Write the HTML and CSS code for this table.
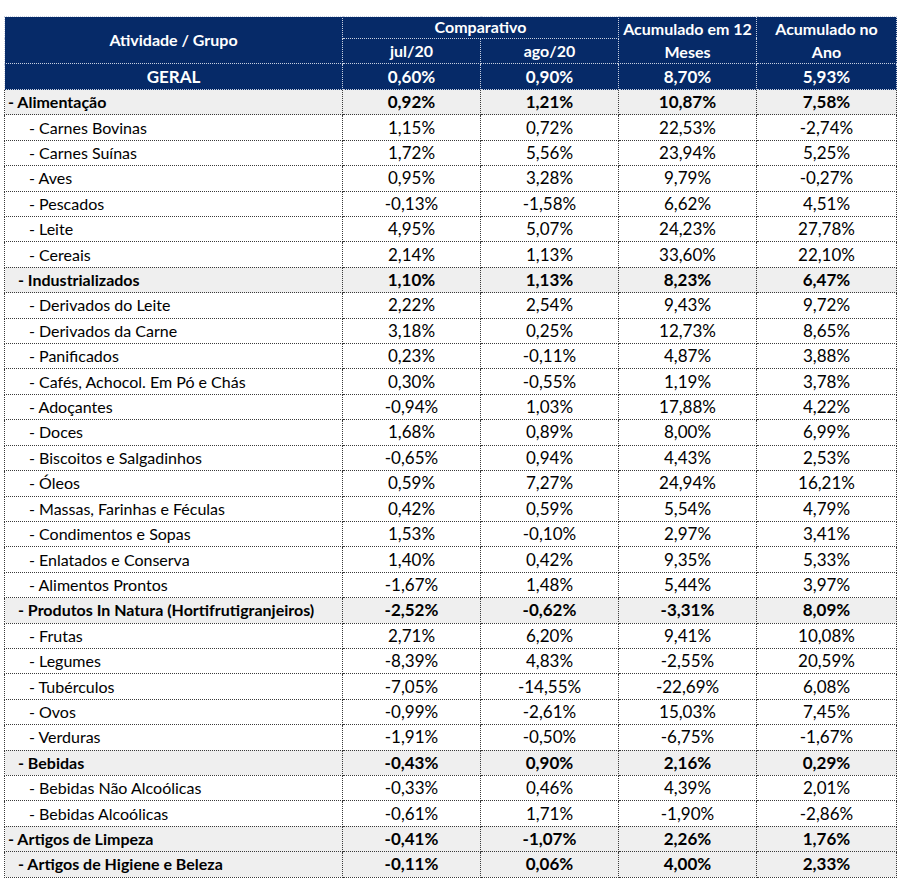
FILE: index.html
```html
<!DOCTYPE html>
<html lang="pt">
<head>
<meta charset="utf-8">
<link rel="stylesheet" href="styles.css">
</head>
<body>
<table class="grid">
  <colgroup>
    <col class="c-name"><col class="c-num"><col class="c-num"><col class="c-num"><col class="c-last">
  </colgroup>
  <thead>
    <tr class="h1">
      <th rowspan="2">Atividade / Grupo</th>
      <th colspan="2">Comparativo</th>
      <th rowspan="2" class="wrap">Acumulado em 12<br>Meses</th>
      <th rowspan="2" class="wrap">Acumulado no<br>Ano</th>
    </tr>
    <tr class="h2">
      <th>jul/20</th>
      <th>ago/20</th>
    </tr>
    <tr class="total">
      <th>GERAL</th><th>0,60%</th><th>0,90%</th><th>8,70%</th><th>5,93%</th>
    </tr>
  </thead>
  <tbody>
    <tr class="grp l0"><td>- Alimentação</td><td>0,92%</td><td>1,21%</td><td>10,87%</td><td>7,58%</td></tr>
    <tr class="l2"><td>- Carnes Bovinas</td><td>1,15%</td><td>0,72%</td><td>22,53%</td><td>-2,74%</td></tr>
    <tr class="l2"><td>- Carnes Suínas</td><td>1,72%</td><td>5,56%</td><td>23,94%</td><td>5,25%</td></tr>
    <tr class="l2"><td>- Aves</td><td>0,95%</td><td>3,28%</td><td>9,79%</td><td>-0,27%</td></tr>
    <tr class="l2"><td>- Pescados</td><td>-0,13%</td><td>-1,58%</td><td>6,62%</td><td>4,51%</td></tr>
    <tr class="l2"><td>- Leite</td><td>4,95%</td><td>5,07%</td><td>24,23%</td><td>27,78%</td></tr>
    <tr class="l2"><td>- Cereais</td><td>2,14%</td><td>1,13%</td><td>33,60%</td><td>22,10%</td></tr>
    <tr class="grp l1"><td>- Industrializados</td><td>1,10%</td><td>1,13%</td><td>8,23%</td><td>6,47%</td></tr>
    <tr class="l2"><td>- Derivados do Leite</td><td>2,22%</td><td>2,54%</td><td>9,43%</td><td>9,72%</td></tr>
    <tr class="l2"><td>- Derivados da Carne</td><td>3,18%</td><td>0,25%</td><td>12,73%</td><td>8,65%</td></tr>
    <tr class="l2"><td>- Panificados</td><td>0,23%</td><td>-0,11%</td><td>4,87%</td><td>3,88%</td></tr>
    <tr class="l2"><td>- Cafés, Achocol. Em Pó e Chás</td><td>0,30%</td><td>-0,55%</td><td>1,19%</td><td>3,78%</td></tr>
    <tr class="l2"><td>- Adoçantes</td><td>-0,94%</td><td>1,03%</td><td>17,88%</td><td>4,22%</td></tr>
    <tr class="l2"><td>- Doces</td><td>1,68%</td><td>0,89%</td><td>8,00%</td><td>6,99%</td></tr>
    <tr class="l2"><td>- Biscoitos e Salgadinhos</td><td>-0,65%</td><td>0,94%</td><td>4,43%</td><td>2,53%</td></tr>
    <tr class="l2"><td>- Óleos</td><td>0,59%</td><td>7,27%</td><td>24,94%</td><td>16,21%</td></tr>
    <tr class="l2"><td>- Massas, Farinhas e Féculas</td><td>0,42%</td><td>0,59%</td><td>5,54%</td><td>4,79%</td></tr>
    <tr class="l2"><td>- Condimentos e Sopas</td><td>1,53%</td><td>-0,10%</td><td>2,97%</td><td>3,41%</td></tr>
    <tr class="l2"><td>- Enlatados e Conserva</td><td>1,40%</td><td>0,42%</td><td>9,35%</td><td>5,33%</td></tr>
    <tr class="l2"><td>- Alimentos Prontos</td><td>-1,67%</td><td>1,48%</td><td>5,44%</td><td>3,97%</td></tr>
    <tr class="grp l1"><td>- Produtos In Natura (Hortifrutigranjeiros)</td><td>-2,52%</td><td>-0,62%</td><td>-3,31%</td><td>8,09%</td></tr>
    <tr class="l2"><td>- Frutas</td><td>2,71%</td><td>6,20%</td><td>9,41%</td><td>10,08%</td></tr>
    <tr class="l2"><td>- Legumes</td><td>-8,39%</td><td>4,83%</td><td>-2,55%</td><td>20,59%</td></tr>
    <tr class="l2"><td>- Tubérculos</td><td>-7,05%</td><td>-14,55%</td><td>-22,69%</td><td>6,08%</td></tr>
    <tr class="l2"><td>- Ovos</td><td>-0,99%</td><td>-2,61%</td><td>15,03%</td><td>7,45%</td></tr>
    <tr class="l2"><td>- Verduras</td><td>-1,91%</td><td>-0,50%</td><td>-6,75%</td><td>-1,67%</td></tr>
    <tr class="grp l1"><td>- Bebidas</td><td>-0,43%</td><td>0,90%</td><td>2,16%</td><td>0,29%</td></tr>
    <tr class="l2"><td>- Bebidas Não Alcoólicas</td><td>-0,33%</td><td>0,46%</td><td>4,39%</td><td>2,01%</td></tr>
    <tr class="l2"><td>- Bebidas Alcoólicas</td><td>-0,61%</td><td>1,71%</td><td>-1,90%</td><td>-2,86%</td></tr>
    <tr class="grp l0"><td>- Artigos de Limpeza</td><td>-0,41%</td><td>-1,07%</td><td>2,26%</td><td>1,76%</td></tr>
    <tr class="grp l1"><td>- Artigos de Higiene e Beleza</td><td>-0,11%</td><td>0,06%</td><td>4,00%</td><td>2,33%</td></tr>
  </tbody>
</table>
</body>
</html>
```
FILE: styles.css
```css
html, body {
  margin: 0;
  padding: 0;
  background: #ffffff;
}
body {
  padding: 16px 0 0 4px;
  font-family: Lato, "Liberation Sans", sans-serif;
  font-size: 16px;
  color: #000;
}
.grid {
  border-collapse: collapse;
  table-layout: fixed;
  width: 892px;
}
.c-name { width: 338px; }
.c-num { width: 138px; }
.c-last { width: 140px; }
.grid th, .grid td {
  border: 1px dotted #3a3a3a;
  padding: 0;
  text-align: center;
  vertical-align: middle;
  line-height: 18px;
  white-space: nowrap;
  font-size: 17px;
}
.grid thead th {
  background: #062a68;
  color: #ffffff;
  font-weight: 700;
  font-size: 16px;
  border-color: #c8d0e0;
}
.h1 th { height: 20px; }
.h2 th { height: 23px; }
.h1 th.wrap { line-height: 23px; vertical-align: top; }
.total th { height: 25px; }
.grid .total th { font-size: 17px; }
.grid tbody tr { height: 25.42px; }
.grid tbody td:first-child { text-align: left; font-size: 16px; }
.grp td { background: #efefef; font-weight: 700; }
.l0 td:first-child { padding-left: 3px; }
.l1 td:first-child { padding-left: 13px; }
.l2 td:first-child { padding-left: 24px; }
```
